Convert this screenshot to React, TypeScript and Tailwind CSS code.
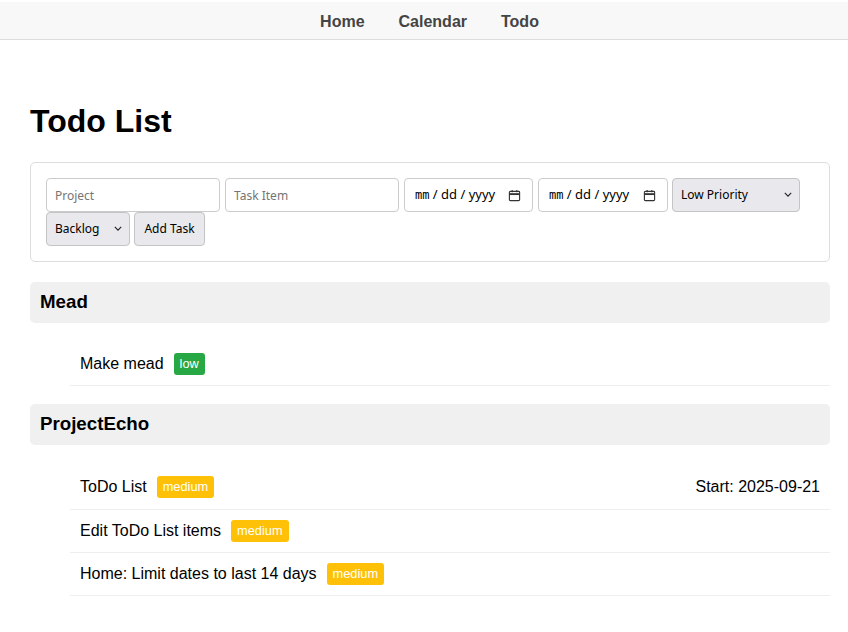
import React from "react";

type Task = { name: string; priority: "low" | "medium"; start?: string };

const groups: { project: string; tasks: Task[] }[] = [
  { project: "Mead", tasks: [{ name: "Make mead", priority: "low" }] },
  {
    project: "ProjectEcho",
    tasks: [
      { name: "ToDo List", priority: "medium", start: "2025-09-21" },
      { name: "Edit ToDo List items", priority: "medium" },
      { name: "Home: Limit dates to last 14 days", priority: "medium" },
    ],
  },
];

const badgeColor = {
  low: "bg-[#28a745]",
  medium: "bg-[#ffc107]",
};

const field =
  "h-[34px] border border-[#cccccc] rounded-[4px] bg-white px-[8px] text-[12px] text-black placeholder:text-[#757575] outline-none";
const control =
  "h-[34px] border border-[#c4c4c4] rounded-[4px] bg-[#e9e9ed] text-[12px] text-black";

function Chevron() {
  return (
    <svg
      viewBox="0 0 10 6"
      className="pointer-events-none absolute right-[8px] top-[14px] w-[8px] h-[5px]"
      fill="none"
      stroke="#222"
      strokeWidth="1.4"
    >
      <path d="M1 1l4 4 4-4" />
    </svg>
  );
}

function Select({ width, label }: { width: string; label: string }) {
  return (
    <div className={`relative ${width}`}>
      <select className={`${control} w-full appearance-none pl-[8px] pr-[20px]`} defaultValue={label}>
        <option value={label}>{label}</option>
      </select>
      <Chevron />
    </div>
  );
}

function DateField({ width }: { width: string }) {
  return (
    <div className={`${field} ${width} flex items-center justify-between pl-[10px] pr-[11px]`}>
      <span className="text-[13px]">
        <span className="font-['DejaVu_Sans_Mono',monospace] text-[12px]">mm</span> / dd / yyyy
      </span>
      <svg viewBox="0 0 14 14" className="w-[13px] h-[13px]" fill="none" stroke="#333" strokeWidth="1.2">
        <rect x="1.5" y="2.5" width="11" height="10" rx="1" />
        <path d="M1.5 5.5h11" strokeWidth="2" />
        <path d="M4.5 1v2.5M9.5 1v2.5" />
      </svg>
    </div>
  );
}

export default function App() {
  return (
    <div className="min-h-screen bg-white font-['Liberation_Sans',Arial,sans-serif] text-black">
      <nav className="mt-[2px] h-[38px] bg-[#f8f8f8] border-b border-[#dddddd] flex items-center justify-center gap-[34px] pl-[11px] pt-[2px]">
        <a className="text-[16px] font-bold text-[#444444]">Home</a>
        <a className="text-[16px] font-bold text-[#444444]">Calendar</a>
        <a className="text-[16px] font-bold text-[#444444]">Todo</a>
      </nav>

      <main className="w-[800px] ml-[30px]">
        <h1 className="mt-[63px] mb-[22px] text-[32px] leading-[37px] font-bold">Todo List</h1>

        <form className="border border-[#dddddd] rounded-[5px] p-[15px] flex flex-wrap font-['Noto_Sans',sans-serif]">
          <input className={`${field} w-[174px]`} placeholder="Project" />
          <input className={`${field} w-[174px] ml-[5px]`} placeholder="Task Item" />
          <div className="ml-[5px]">
            <DateField width="w-[129px]" />
          </div>
          <div className="ml-[5px]">
            <DateField width="w-[130px]" />
          </div>
          <div className="ml-[4px]">
            <Select width="w-[128px]" label="Low Priority" />
          </div>
          <Select width="w-[84px]" label="Backlog" />
          <button type="button" className={`${control} w-[71px] px-[8px] ml-[4px]`}>
            Add Task
          </button>
        </form>

        <div className="mt-[20px]">
          {groups.map((g) => (
            <section key={g.project}>
              <h3 className="bg-[#f0f0f0] rounded-[5px] px-[10px] h-[41px] flex items-center text-[18.72px] font-bold">
                {g.project}
              </h3>
              <ul className="ml-[40px] mt-[20px] mb-[18px]">
                {g.tasks.map((t) => (
                  <li
                    key={t.name}
                    className="flex items-center justify-between px-[10px] py-[10px] border-b border-[#eeeeee] text-[16px]"
                  >
                    <div className="flex items-center h-[22px]">
                      <span>{t.name}</span>
                      <span
                        className={`ml-[10px] h-[22px] px-[6px] rounded-[3px] flex items-center text-[12.8px] text-white ${badgeColor[t.priority]}`}
                      >
                        {t.priority}
                      </span>
                    </div>
                    {t.start && <span>Start: {t.start}</span>}
                  </li>
                ))}
              </ul>
            </section>
          ))}
        </div>
      </main>
    </div>
  );
}
